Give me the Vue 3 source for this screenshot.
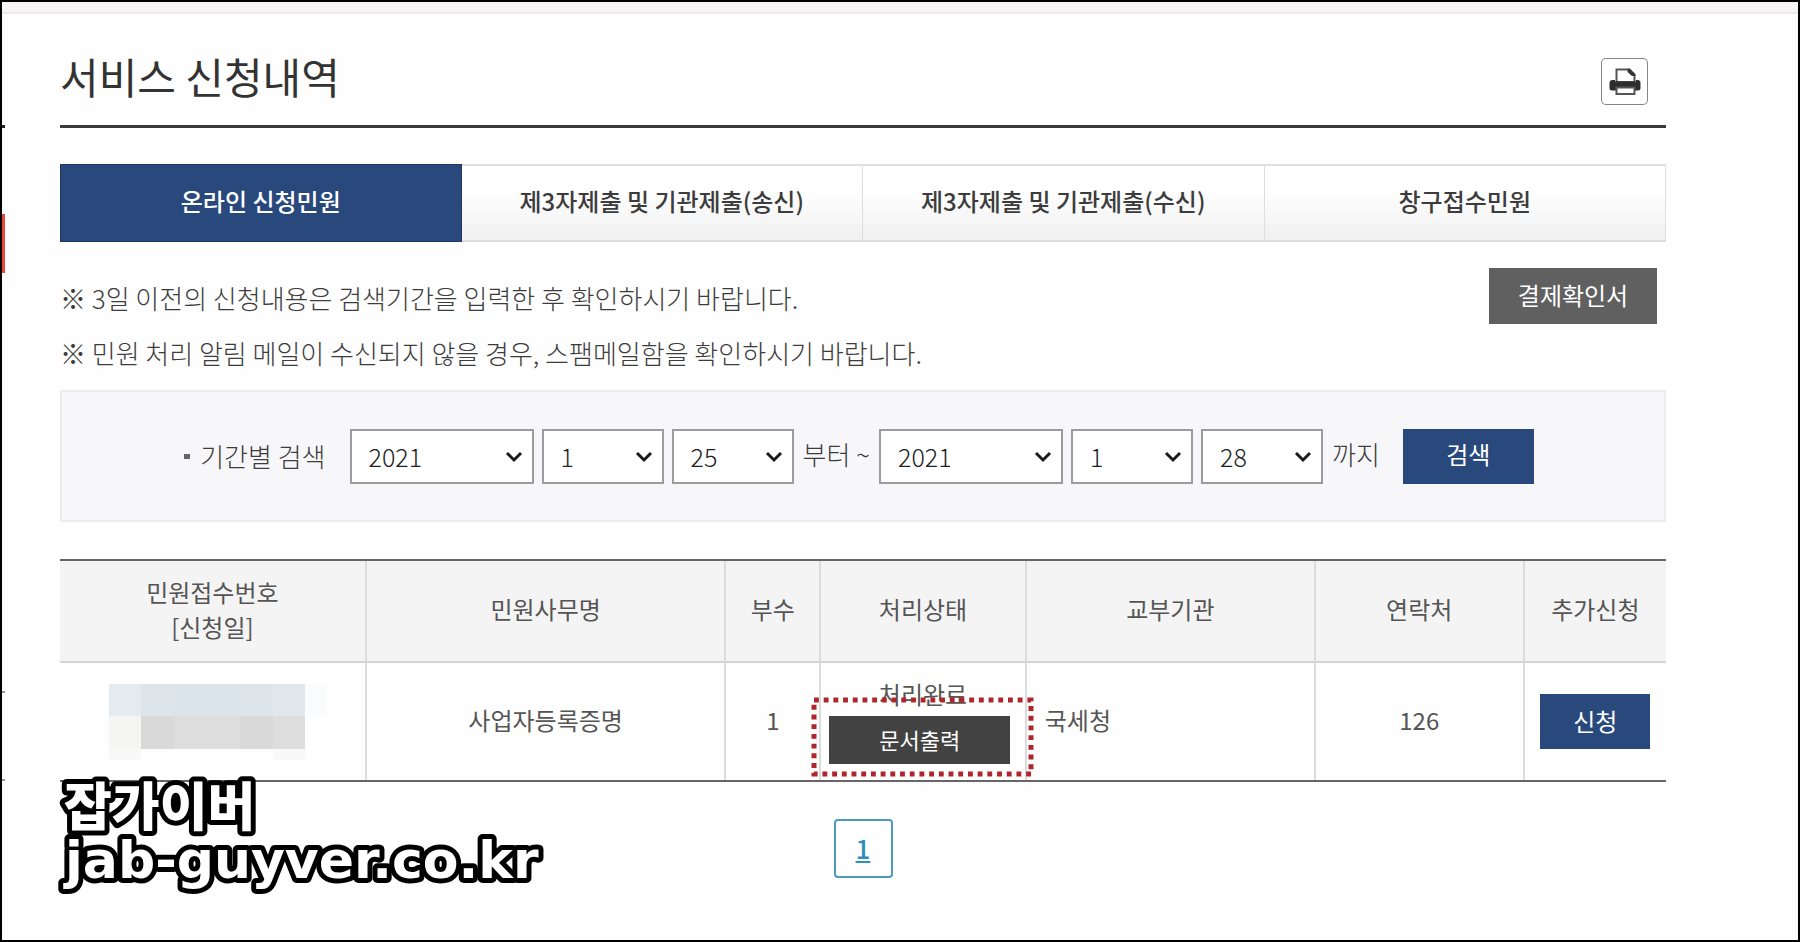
<script setup>
import { ref } from 'vue'

const tabs = ['온라인 신청민원', '제3자제출 및 기관제출(송신)', '제3자제출 및 기관제출(수신)', '창구접수민원']
const activeTab = ref(0)

const years = ['2020', '2021']
const months = Array.from({ length: 12 }, (_, i) => String(i + 1))
const days = Array.from({ length: 31 }, (_, i) => String(i + 1))

const from = ref([
  { id: 'from-year', label: '시작 연도', value: '2021', options: years, wide: true },
  { id: 'from-month', label: '시작 월', value: '1', options: months },
  { id: 'from-day', label: '시작 일', value: '25', options: days },
])
const to = ref([
  { id: 'to-year', label: '종료 연도', value: '2021', options: years, wide: true },
  { id: 'to-month', label: '종료 월', value: '1', options: months },
  { id: 'to-day', label: '종료 일', value: '28', options: days },
])
</script>

<template>
  <div class="page">
    <div class="strip"></div>
    <span class="edge edge-title"></span>
    <span class="edge edge-red"></span>
    <span class="edge edge-row"></span>
    <span class="edge edge-end"></span>

    <main class="content">
      <header class="head">
        <h1>서비스 신청내역</h1>
        <button class="print" type="button" aria-label="인쇄">
          <svg viewBox="0 0 47 47" width="47" height="47" aria-hidden="true">
            <path d="M15.5 24V11.5H28L33.5 17V24Z" fill="#fff" stroke="#555" stroke-width="2" />
            <path d="M26.5 10.7H29L34.3 16V18H31L26.5 14Z" fill="#333" />
            <path d="M8.5 25Q8.5 22 11.5 22H14V23.5H35V22H36.5Q39.5 22 39.5 25V30Q39.5 32.5 37 32.5H11Q8.5 32.5 8.5 30Z" fill="#2e2e2e" />
            <path d="M15.5 29.5H33.5V36H15.5Z" fill="#fff" stroke="#555" stroke-width="2" />
          </svg>
        </button>
      </header>

      <nav class="tabs">
        <button
          v-for="(t, i) in tabs"
          :key="t"
          type="button"
          class="tab"
          :class="{ active: i === activeTab }"
          @click="activeTab = i"
        >{{ t }}</button>
      </nav>

      <section class="notes">
        <div>
          <p>※ 3일 이전의 신청내용은 검색기간을 입력한 후 확인하시기 바랍니다.</p>
          <p>※ 민원 처리 알림 메일이 수신되지 않을 경우, 스팸메일함을 확인하시기 바랍니다.</p>
        </div>
        <button type="button" class="btn receipt">결제확인서</button>
      </section>

      <form class="search" @submit.prevent>
        <span class="caption">기간별 검색</span>
        <span class="group">
          <span v-for="f in from" :key="f.id" class="pick" :class="{ wide: f.wide }">
            <select :id="f.id" v-model="f.value" :aria-label="f.label">
              <option v-for="o in f.options" :key="o">{{ o }}</option>
            </select>
            <svg viewBox="0 0 18 12" width="18" height="12" aria-hidden="true"><path d="M2 2L9 9L16 2" /></svg>
          </span>
        </span>
        <span class="word">부터 ~</span>
        <span class="group">
          <span v-for="f in to" :key="f.id" class="pick" :class="{ wide: f.wide }">
            <select :id="f.id" v-model="f.value" :aria-label="f.label">
              <option v-for="o in f.options" :key="o">{{ o }}</option>
            </select>
            <svg viewBox="0 0 18 12" width="18" height="12" aria-hidden="true"><path d="M2 2L9 9L16 2" /></svg>
          </span>
        </span>
        <span class="word">까지</span>
        <button type="submit" class="btn find">검색</button>
      </form>

      <div class="frame">
        <table class="list">
          <colgroup>
            <col class="c-no"><col class="c-name"><col class="c-qty"><col class="c-state">
            <col class="c-org"><col class="c-tel"><col class="c-add">
          </colgroup>
          <thead>
            <tr>
              <th>민원접수번호<br>[신청일]</th>
              <th>민원사무명</th>
              <th>부수</th>
              <th>처리상태</th>
              <th>교부기관</th>
              <th>연락처</th>
              <th>추가신청</th>
            </tr>
          </thead>
          <tbody>
            <tr>
              <td>
                <div class="mosaic">
                  <i class="b1"></i><i class="b2"></i><i class="b3"></i><i class="b3"></i><i class="b2"></i><i class="b4"></i><i class="b5"></i>
                  <i class="g1"></i><i class="g2"></i><i class="g3"></i><i class="g3"></i><i class="g2"></i><i class="g3"></i><i></i>
                  <i class="f1"></i><i></i><i></i><i></i><i></i><i class="f1"></i><i></i>
                </div>
              </td>
              <td>사업자등록증명</td>
              <td>1</td>
              <td class="state">
                처리완료
                <div class="print-doc">
                  <button type="button" class="btn doc">문서출력</button>
                  <svg class="callout" viewBox="0 0 223 80" width="223" height="80" aria-hidden="true">
                    <rect x="3" y="3" width="217" height="74" pathLength="600" />
                  </svg>
                </div>
              </td>
              <td class="org">국세청</td>
              <td>126</td>
              <td><button type="button" class="btn apply">신청</button></td>
            </tr>
          </tbody>
        </table>
      </div>

      <nav class="pager"><a href="#" aria-current="page">1</a></nav>
    </main>

    <svg class="mark" viewBox="0 0 520 160" width="520" height="160">
      <text x="10" y="80">잡가이버</text>
      <text class="site" x="11" y="132">jab-guyver.co.kr</text>
    </svg>
  </div>
</template>

<style>
body { margin: 0; }
</style>

<style scoped>
.page, .page * { box-sizing: border-box; }
.page {
  position: relative;
  min-height: 100vh;
  border: 2px solid #000;
  background: #fefefe;
  color: #555;
  font-family: "Noto Sans CJK KR", "Noto Sans", sans-serif;
  font-size: 24px;
  line-height: 36px;
}
button, select { font: inherit; margin: 0; cursor: pointer; }
.strip { height: 12px; background: #f6f4f4; border-bottom: 2px solid #ececec; }
.edge { position: absolute; left: 0; width: 3px; height: 2px; background: #999; }
.edge-title { top: 123px; height: 3px; background: #222; }
.edge-red { top: 212px; height: 59px; background: #e5483c; }
.edge-row { top: 689px; }
.edge-end { top: 777px; }

.content { margin: 0 132px 0 58px; white-space: nowrap; }
.head {
  display: flex;
  justify-content: space-between;
  align-items: center;
  padding: 44px 18px 20px 0;
  border-bottom: 3px solid #3a3a3a;
}
h1 { margin: 0; font-size: 42px; line-height: 36px; font-weight: 400; color: #333; padding-bottom: 11px; }
.print { width: 47px; height: 47px; padding: 0; border: 0; border-radius: 5px; background: #fff; box-shadow: inset 0 0 0 1px #858585; }
.print svg { display: block; }

.tabs { display: grid; grid-template-columns: repeat(4, 1fr); margin-top: 36px; }
.tab {
  height: 78px;
  padding: 0 0 4px;
  border: solid #dedede;
  border-width: 2px 1px 2px 0;
  background: linear-gradient(#fff 30%, #f0f0f0);
  color: #3c3c3c;
  font-weight: 500;
}
.tab.active { background: #29497d; border: 1px solid #1f3760; color: #fff; }

.notes { display: flex; justify-content: space-between; align-items: flex-start; margin-top: 26px; padding-right: 9px; font-size: 26px; }
.notes p { margin: 0; line-height: 55px; font-weight: 300; color: #3c3c3c; }
.notes div { padding-top: 2px; }
.btn { border: 0; padding: 0 0 2px; color: #fff; background: #29497d; text-align: center; }
.receipt { width: 168px; height: 56px; background: #606060; }
.receipt.btn { font-size: 24px; }

.search {
  display: flex;
  justify-content: center;
  align-items: center;
  height: 132px;
  margin-top: 10px;
  padding-right: 8px;
  border: 2px solid #ececee;
  background: #f7f7fa;
  color: #3c3c3c;
  font-size: 26px;
  font-weight: 300;
}
.caption { display: flex; align-items: center; gap: 10px; margin-right: 24px; }
.caption::before { content: ""; width: 6px; height: 5px; background: #666; }
.group { display: flex; gap: 8px; }
.word { margin: 0 9px; padding-bottom: 4px; }
.pick { position: relative; width: 122px; }
.pick.wide { width: 184px; }
select {
  appearance: none;
  display: block;
  width: 100%;
  height: 55px;
  padding: 0 0 0 17px;
  border: 2px solid #9c9c9c;
  border-radius: 0;
  background: #fff;
  color: #222;
  font-size: 25px;
}
.pick svg { position: absolute; right: 11px; top: 22px; pointer-events: none; }
.pick path { fill: none; stroke: #1a1a1a; stroke-width: 3; }
.find { width: 131px; height: 55px; margin-left: 14px; padding-bottom: 5px; font-size: 24px; font-weight: 400; }

.frame { margin-top: 37px; border: solid #666; border-width: 2px 0; }
.list {
  width: 100%;
  table-layout: fixed;
  border-collapse: separate;
  border-spacing: 0;
}
.c-no { width: 19.1%; }
.c-name { width: 22.4%; }
.c-qty { width: 5.9%; }
.c-state { width: 12.8%; }
.c-org { width: 18%; }
.c-tel { width: 13%; }
.c-add { width: 8.8%; }
th, td { padding: 0 0 4px; text-align: center; vertical-align: middle; font-weight: 400; border-right: 2px solid #dcdcdc; }
th:last-child, td:last-child { border-right: 0; }
th { height: 102px; padding-bottom: 5px; line-height: 35px; background: #f4f4f4; border-bottom: 2px solid #d4d4d4; }
td { height: 117px; }
td:first-child, td:last-child { padding-bottom: 0; }
.state { line-height: 29px; padding: 0; }
.org { text-align: left; padding-left: 18px; }
.print-doc { position: relative; width: 181px; margin: 8px 0 0 8px; }
.doc { display: block; width: 100%; height: 48px; background: #424242; font-size: 22px; }
.callout { position: absolute; left: -18px; top: -19px; }
.callout rect { fill: none; stroke: #ae262b; stroke-width: 5; stroke-dasharray: 5 5; }
.apply { width: 110px; height: 55px; vertical-align: middle; }

.mosaic { display: grid; grid-template-columns: 32px repeat(4, 33px) 32px 20px; grid-template-rows: 32px 33px 11px; margin-left: 49px; }
.b1 { background: #e4eaee; }
.b2 { background: #dee5ea; }
.b3 { background: #dbe3eb; }
.b4 { background: #e2e7ec; }
.b5 { background: #f9fbfc; }
.g1 { background: #f5f5f4; }
.g2 { background: #d9d9d9; }
.g3 { background: #dedede; }
.f1 { background: #f9f9f9; }

.pager { display: flex; justify-content: center; margin-top: 37px; }
.pager a {
  width: 59px;
  height: 59px;
  border: 2px solid #4d9ab5;
  border-radius: 4px;
  background: #fff;
  color: #2e8fbc;
  font-size: 26px;
  line-height: 53px;
  font-weight: 500;
  text-align: center;
}

.mark {
  position: absolute;
  left: 52px;
  top: 744px;
  overflow: visible;
  pointer-events: none;
}
.mark text {
  fill: #fff;
  stroke: #000;
  stroke-width: 10px;
  stroke-linejoin: round;
  paint-order: stroke fill;
  font-size: 52px;
  font-weight: 900;
}
.mark .site { font-family: "DejaVu Sans", sans-serif; font-weight: 700; }
</style>
